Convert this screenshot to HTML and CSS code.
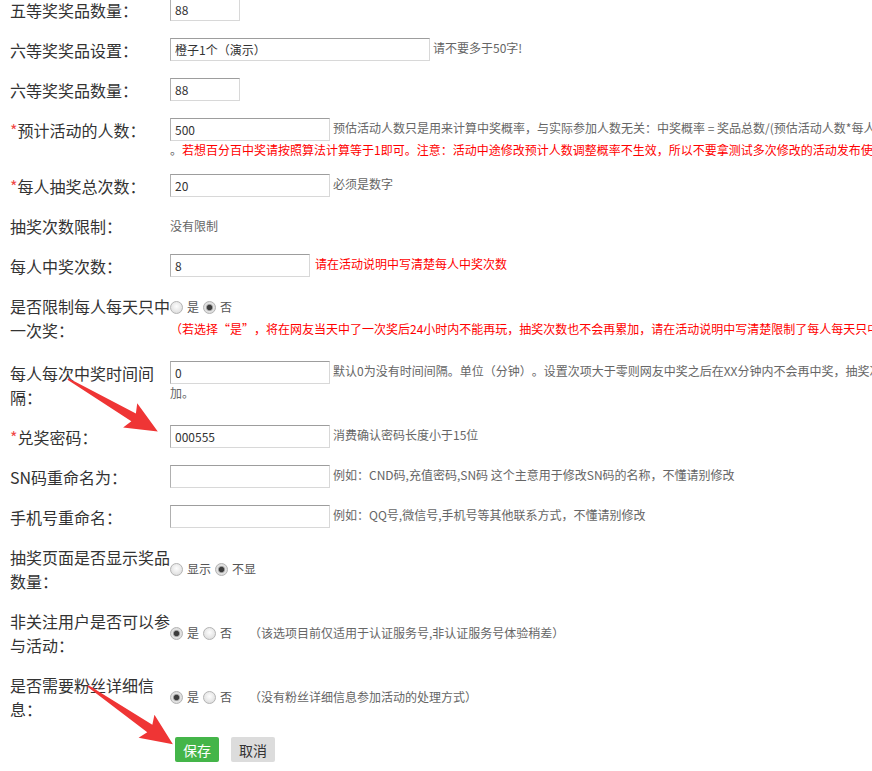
FILE: index.html
```html
<!DOCTYPE html>
<html lang="zh-CN">
<head>
<meta charset="utf-8">
<title>奖品设置</title>
<link rel="stylesheet" href="styles.css">
</head>
<body>
<div class="page">
  <table class="form">
    <colgroup><col class="c-label"><col class="c-value"></colgroup>
    <tr>
      <td class="label">五等奖奖品数量：</td>
      <td class="value"><input class="ipt w70" value="88"></td>
    </tr>
    <tr>
      <td class="label">六等奖奖品设置：</td>
      <td class="value"><input class="ipt w260" value="橙子1个（演示）"><span class="hint">请不要多于50字!</span></td>
    </tr>
    <tr>
      <td class="label">六等奖奖品数量：</td>
      <td class="value"><input class="ipt w70" value="88"></td>
    </tr>
    <tr>
      <td class="label"><span class="req">*</span>预计活动的人数：</td>
      <td class="value"><div class="line"><input class="ipt w160" value="500"><span class="hint">预估活动人数只是用来计算中奖概率，与实际参加人数无关：中奖概率 = 奖品总数/(预估活动人数*每人抽奖总次数)</span></div><div class="line2"><span class="hint">。</span><span class="warn">若想百分百中奖请按照算法计算等于1即可。注意：活动中途修改预计人数调整概率不生效，所以不要拿测试多次修改的活动发布使用。</span></div></td>
    </tr>
    <tr>
      <td class="label"><span class="req">*</span>每人抽奖总次数：</td>
      <td class="value"><input class="ipt w160" value="20"><span class="hint">必须是数字</span></td>
    </tr>
    <tr>
      <td class="label">抽奖次数限制：</td>
      <td class="value plain">没有限制</td>
    </tr>
    <tr>
      <td class="label">每人中奖次数：</td>
      <td class="value"><input class="ipt w140" value="8"><span class="warn gap">请在活动说明中写清楚每人中奖次数</span></td>
    </tr>
    <tr>
      <td class="label">是否限制每人每天只中一次奖：</td>
      <td class="value">
        <div class="radios first"><label class="opt"><input type="radio" name="r1"><span>是</span></label><label class="opt"><input type="radio" name="r1" checked><span>否</span></label></div>
        <div class="warn block">（若选择“是”，将在网友当天中了一次奖后24小时内不能再玩，抽奖次数也不会再累加，请在活动说明中写清楚限制了每人每天只中一次奖）</div>
      </td>
    </tr>
    <tr>
      <td class="label">每人每次中奖时间间隔：</td>
      <td class="value"><input class="ipt w160" value="0"><span class="hint">默认0为没有时间间隔。单位（分钟）。设置次项大于零则网友中奖之后在XX分钟内不会再中奖，抽奖次数也不会累加。</span></td>
    </tr>
    <tr>
      <td class="label"><span class="req">*</span>兑奖密码：</td>
      <td class="value"><input class="ipt w160" value="000555"><span class="hint">消费确认密码长度小于15位</span></td>
    </tr>
    <tr>
      <td class="label">SN码重命名为：</td>
      <td class="value"><input class="ipt w160" value=""><span class="hint">例如：CND码,充值密码,SN码 这个主意用于修改SN码的名称，不懂请别修改</span></td>
    </tr>
    <tr>
      <td class="label">手机号重命名：</td>
      <td class="value"><input class="ipt w160" value=""><span class="hint">例如：QQ号,微信号,手机号等其他联系方式，不懂请别修改</span></td>
    </tr>
    <tr>
      <td class="label">抽奖页面是否显示奖品数量：</td>
      <td class="value mid">
        <div class="radios"><label class="opt"><input type="radio" name="r2"><span>显示</span></label><label class="opt"><input type="radio" name="r2" checked><span>不显</span></label></div>
      </td>
    </tr>
    <tr>
      <td class="label">非关注用户是否可以参与活动：</td>
      <td class="value mid">
        <div class="radios"><label class="opt"><input type="radio" name="r3" checked><span>是</span></label><label class="opt"><input type="radio" name="r3"><span>否</span></label><span class="note">（该选项目前仅适用于认证服务号,非认证服务号体验稍差）</span></div>
      </td>
    </tr>
    <tr>
      <td class="label">是否需要粉丝详细信息：</td>
      <td class="value mid">
        <div class="radios"><label class="opt"><input type="radio" name="r4" checked><span>是</span></label><label class="opt"><input type="radio" name="r4"><span>否</span></label><span class="note">（没有粉丝详细信息参加活动的处理方式）</span></div>
      </td>
    </tr>
    <tr>
      <td class="label"></td>
      <td class="value btns"><button class="btn btn-save">保存</button><button class="btn btn-cancel">取消</button></td>
    </tr>
  </table>

  <svg class="arrows" width="872" height="771" viewBox="0 0 872 771" aria-hidden="true">
    <polygon class="arrow" points="0,-1 76,-4.5 72,-14 104,0 72,14 76,4.5 0,1" transform="translate(68 379) rotate(30.3)"/>
    <polygon class="arrow" points="0,-1 75,-4.5 71,-14 103,0 71,14 75,4.5 0,1" transform="translate(88 686) rotate(34.5)"/>
  </svg>
</div>
</body>
</html>
```

FILE: styles.css
```css
html, body {
  margin: 0;
  padding: 0;
  overflow: hidden;
  background: #fff;
}

body {
  font-family: "Noto Sans CJK SC", "Microsoft YaHei", sans-serif;
  color: #333;
  text-spacing-trim: space-all;
}

.page {
  position: relative;
  width: 872px;
  height: 771px;
  overflow: hidden;
}

.form {
  border-collapse: collapse;
  border-spacing: 0;
  table-layout: fixed;
  width: 935px;
  margin: -10px 0 0 10px;
}

.c-label { width: 160px; }
.c-value { width: 775px; }

.form td {
  padding: 8px 0;
  vertical-align: top;
}

.label {
  font-size: 16px;
  line-height: 24px;
  color: #333;
}

.req {
  color: #f04848;
}

.value {
  font-size: 12px;
  line-height: 17px;
  color: #666;
}

.value.plain {
  line-height: 24px;
}

.value.mid {
  vertical-align: middle;
}

.line {
  white-space: nowrap;
}

.ipt {
  box-sizing: border-box;
  height: 23px;
  margin: 0 3px 0 0;
  padding: 0 4px;
  vertical-align: middle;
  border: 1px solid;
  border-color: #9d9d9d #d8d8d8 #d8d8d8 #b0b0b0;
  background: #fff;
  font: 12px "Noto Sans CJK SC", sans-serif;
  color: #333;
  outline: none;
  text-spacing-trim: space-all;
}

.w70 { width: 70px; }
.w140 { width: 140px; }
.w160 { width: 160px; }
.w260 { width: 260px; }

.hint {
  color: #666;
}

.warn {
  color: #f00;
}

.warn.gap {
  margin-left: 2px;
}

.warn.block {
  white-space: nowrap;
  padding-bottom: 8px;
}

.radios {
  line-height: 24px;
  color: #555;
  white-space: nowrap;
}

.radios.first {
  line-height: 26px;
}

.opt {
  margin-right: 4px;
}

.opt input {
  -webkit-appearance: none;
  appearance: none;
  box-sizing: border-box;
  width: 13px;
  height: 13px;
  margin: 0 4px 0 0;
  border: 1px solid #b4b4b4;
  border-radius: 50%;
  background: radial-gradient(circle at 50% 40%, #fdfdfd 0, #e6e6e6 60%, #d4d4d4 100%);
  vertical-align: -2px;
}

.opt input:checked {
  background: radial-gradient(circle, #3c3c3c 0, #3c3c3c 2.2px, #9a9a9a 3px, #e2e2e2 4px, #d6d6d6 100%);
}

.note {
  margin-left: 13px;
  color: #666;
}

.btns {
  padding-left: 5px;
}

.btn {
  box-sizing: border-box;
  width: 44px;
  height: 25px;
  padding: 0;
  border: 0;
  border-radius: 2px;
  font: 14px "Noto Sans CJK SC", sans-serif;
  vertical-align: middle;
  cursor: pointer;
}

.btns .btn-save {
  margin-left: 5px;
  background: #44b549;
  color: #fff;
}

.btn-cancel {
  margin-left: 12px;
  background: #dcdcdc;
  color: #333;
}

.arrows {
  position: absolute;
  top: 0;
  left: 0;
  pointer-events: none;
}

.arrow {
  fill: #ef3535;
}
```
